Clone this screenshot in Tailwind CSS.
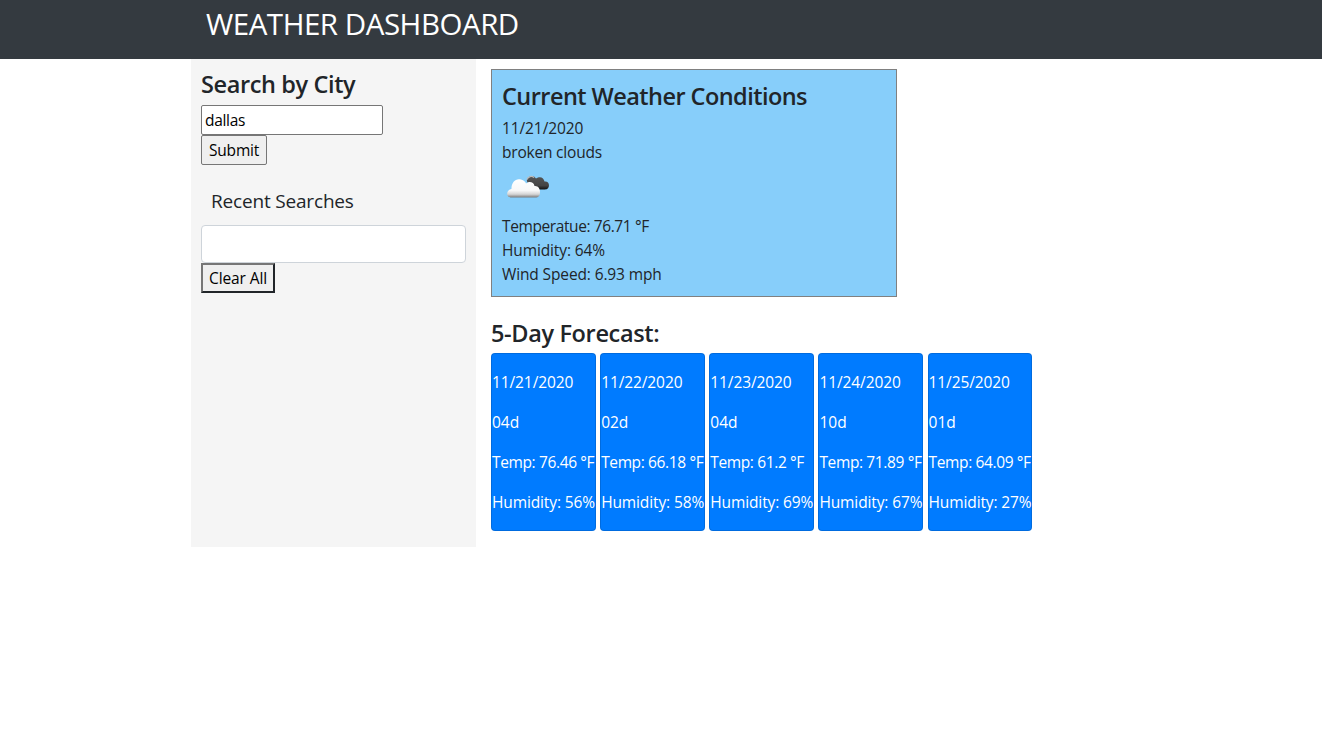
<!DOCTYPE html>
<html lang="en">
<head>
<meta charset="utf-8">
<title>Weather Dashboard</title>
<script src="https://cdn.jsdelivr.net/npm/@tailwindcss/browser@4"></script>
</head>
<body class="bg-white font-['Open_Sans',sans-serif] text-[15.5px] leading-6 text-[#212529]">
<header class="h-[59px] bg-[#343a40] pl-[206px]">
  <h1 class="text-[29.5px] leading-[48px] tracking-[-0.47px] text-white">WEATHER DASHBOARD</h1>
</header>
<main class="flex pl-[191px]">
  <aside class="h-[488px] w-[285px] bg-[#f5f5f5] px-[10px] pt-[10px]">
    <h2 class="text-[23.5px] leading-[30px] font-semibold tracking-[-0.38px]">Search by City</h2>
    <form class="mt-[6px] flex flex-col items-start">
      <input type="text" value="dallas" class="h-[30px] w-[182px] rounded-[2px] border border-[#767676] bg-white px-[3px] tracking-[-0.3px] text-black">
      <button type="button" class="h-[30px] w-[66px] rounded-[2px] border border-[#767676] bg-[#efefef] pl-[7px] text-left leading-[29px] tracking-[-0.2px] text-black">Submit</button>
    </form>
    <h3 class="mt-[21px] pl-[10px] text-[19px] leading-[30px] tracking-[-0.18px]">Recent Searches</h3>
    <div class="mt-[9px] h-[38px] w-[265px] rounded-[4px] border border-[#ced4da] bg-white"></div>
    <button type="button" class="block h-[30px] w-[74px] border-2 border-t-[#767676] border-r-[#212529] border-b-[#212529] border-l-[#767676] bg-[#efefef] pl-[6px] text-left leading-[27px] tracking-[-0.1px] text-black">Clear All</button>
  </aside>
  <div class="ml-[15px]">
    <section class="mt-[10px] h-[228px] w-[406px] border border-[#808080] bg-[#87cefa] px-[10px] pt-[12px]">
      <h2 class="mb-[5px] text-[23.5px] leading-[29px] font-semibold tracking-[-0.55px]">Current Weather Conditions</h2>
      <p class="tracking-[-0.1px]">11/21/2020</p>
      <p class="tracking-[-0.2px]">broken clouds</p>
      <svg class="block" width="50" height="50" viewBox="0 0 50 50">
        <defs>
          <linearGradient id="dark" x1="0" y1="0" x2="0" y2="1"><stop offset="0" stop-color="#555"/><stop offset=".7" stop-color="#444"/><stop offset="1" stop-color="#111"/></linearGradient>
          <linearGradient id="white" x1="0" y1="0" x2="0" y2="1"><stop offset="0" stop-color="#fff"/><stop offset=".62" stop-color="#f8f8f8"/><stop offset=".82" stop-color="#d4d4d4"/><stop offset="1" stop-color="#777"/></linearGradient>
        </defs>
        <g transform="translate(0 .6)">
          <path d="M25 17 C24 12 31 9 34 14 C38 11 42 13 42.500 17 C45 16.500 47 18 47 21 C46.500 24.500 45 25 42 25 H30Z" fill="url(#dark)"/>
          <path d="M25 15 C26 11.500 30 11 32 13" fill="none" stroke="#bbb" stroke-width="1.300"/>
          <path d="M9.500 33 C3.500 33 4 25 9.500 24.500 C9 18 14 13 19 15 C22 15.500 23.500 17.500 24 19 C27 16 32 17.500 32.500 21.500 C36 21 38 24 38 27.500 C38 31 37 33 33 33Z" fill="url(#white)"/>
        </g>
      </svg>
      <p class="tracking-[-0.4px]">Temperatue: 76.71 °F</p>
      <p class="tracking-[-0.12px]">Humidity: 64%</p>
      <p class="tracking-[-0.13px]">Wind Speed: 6.93 mph</p>
    </section>
    <h2 class="mt-[22px] text-[23.5px] leading-[29px] font-semibold tracking-[-0.35px]">5-Day Forecast:</h2>
    <div class="mt-[5px] flex gap-[4.5px] whitespace-nowrap text-white">
      <div class="flex h-[178px] w-[104.65px] flex-col gap-4 rounded-[4px] border border-black/[.125] bg-[#007bff] pt-4">
        <p class="tracking-[-0.1px]">11/21/2020</p><p>04d</p><p class="tracking-[-0.37px]">Temp: 76.46 °F</p><p class="tracking-[-0.12px]">Humidity: 56%</p>
      </div>
      <div class="flex h-[178px] w-[104.65px] flex-col gap-4 rounded-[4px] border border-black/[.125] bg-[#007bff] pt-4">
        <p class="tracking-[-0.1px]">11/22/2020</p><p>02d</p><p class="tracking-[-0.37px]">Temp: 66.18 °F</p><p class="tracking-[-0.12px]">Humidity: 58%</p>
      </div>
      <div class="flex h-[178px] w-[104.65px] flex-col gap-4 rounded-[4px] border border-black/[.125] bg-[#007bff] pt-4">
        <p class="tracking-[-0.1px]">11/23/2020</p><p>04d</p><p class="tracking-[-0.37px]">Temp: 61.2 °F</p><p class="tracking-[-0.12px]">Humidity: 69%</p>
      </div>
      <div class="flex h-[178px] w-[104.65px] flex-col gap-4 rounded-[4px] border border-black/[.125] bg-[#007bff] pt-4">
        <p class="tracking-[-0.1px]">11/24/2020</p><p>10d</p><p class="tracking-[-0.37px]">Temp: 71.89 °F</p><p class="tracking-[-0.12px]">Humidity: 67%</p>
      </div>
      <div class="flex h-[178px] w-[104.65px] flex-col gap-4 rounded-[4px] border border-black/[.125] bg-[#007bff] pt-4">
        <p class="tracking-[-0.1px]">11/25/2020</p><p>01d</p><p class="tracking-[-0.37px]">Temp: 64.09 °F</p><p class="tracking-[-0.12px]">Humidity: 27%</p>
      </div>
    </div>
  </div>
</main>
</body>
</html>
